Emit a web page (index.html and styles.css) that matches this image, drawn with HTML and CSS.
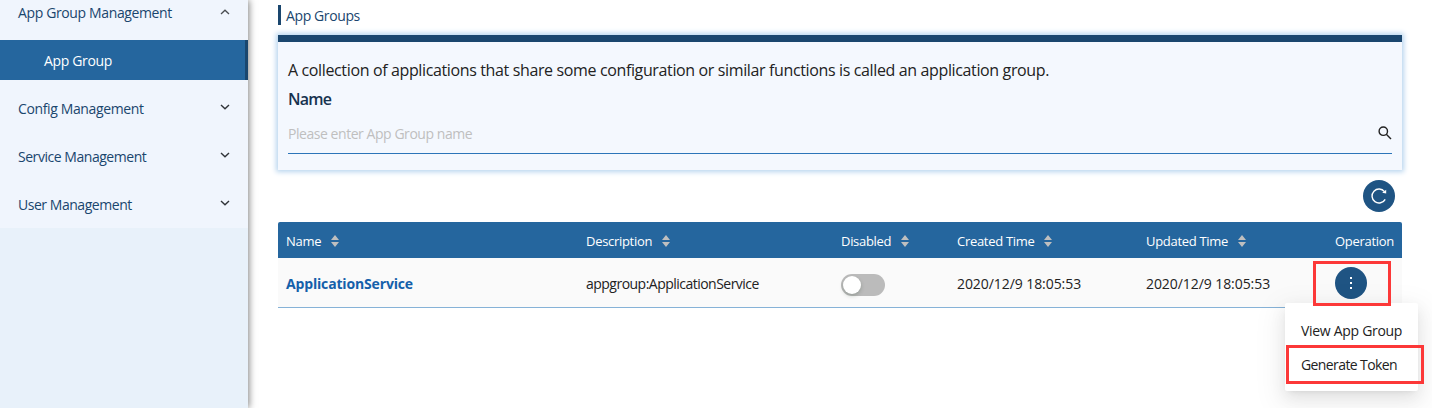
FILE: index.html
```html
<!DOCTYPE html>
<html lang="en">
<head>
<meta charset="utf-8">
<title>App Groups</title>
<link rel="stylesheet" href="styles.css">
</head>
<body>
<svg class="defs" width="0" height="0">
  <symbol id="up" viewBox="0 0 10 6"><path d="M1 5 5 1.2 9 5" fill="none" stroke="#4a4d52" stroke-width="1.3"/></symbol>
  <symbol id="down" viewBox="0 0 10 6"><path d="M1 1 5 4.8 9 1" fill="none" stroke="#303338" stroke-width="1.4"/></symbol>
  <symbol id="sort" viewBox="0 0 8 12"><path d="M0 5 4 0 8 5ZM0 7H8L4 12Z" fill="#bfbfbf"/></symbol>
</svg>
<div class="app">
  <nav class="sidebar">
    <div class="menu">
      <div class="item first"><span class="tight-a">App Group Management</span><svg class="chev"><use href="#up"/></svg></div>
      <div class="sub">App Group</div>
      <div class="item"><span class="config">Config Management</span><svg class="chev"><use href="#down"/></svg></div>
      <div class="item"><span>Service Management</span><svg class="chev"><use href="#down"/></svg></div>
      <div class="item"><span>User Management</span><svg class="chev"><use href="#down"/></svg></div>
    </div>
  </nav>
  <main class="main">
    <h1 class="title">App Groups</h1>
    <section class="panel">
      <p class="desc">A collection of applications that share some configuration or similar functions is called an application group.</p>
      <div class="label">Name</div>
      <div class="field">
        <span class="placeholder">Please enter App Group name</span>
        <svg class="search" width="14" height="14" viewBox="0 0 14 14"><g fill="none" stroke="#222" stroke-width="1.4"><circle cx="5.3" cy="5.2" r="4.2"/><path d="M8.3 8.3 13 13"/></g></svg>
      </div>
    </section>
    <div class="toolbar">
      <button class="round" aria-label="Refresh"><svg width="18" height="18" viewBox="0 0 18 18"><path d="M15.2 12.3A7 7 0 1 1 14.5 4.6" fill="none" stroke="#fff" stroke-width="1.4"/><path d="M16.2 2.7V6.6L12.2 5.7Z" fill="#fff"/></svg></button>
    </div>
    <div class="table">
      <div class="row head">
        <span>Name<svg class="sort"><use href="#sort"/></svg></span>
        <span>Description<svg class="sort"><use href="#sort"/></svg></span>
        <span>Disabled<svg class="sort"><use href="#sort"/></svg></span>
        <span>Created Time<svg class="sort"><use href="#sort"/></svg></span>
        <span>Updated Time<svg class="sort"><use href="#sort"/></svg></span>
        <span>Operation</span>
      </div>
      <div class="row body">
        <a class="link">ApplicationService</a>
        <span class="group">appgroup:ApplicationService</span>
        <span><i class="switch"></i></span>
        <span class="date">2020/12/9 18:05:53</span>
        <span class="date">2020/12/9 18:05:53</span>
        <span class="op"><button class="round" aria-label="More"><i class="dots"></i></button>
          <span class="mark mark-op"></span>
          <div class="dropdown">
            <div class="option">View App Group</div>
            <div class="option generate">Generate Token<span class="mark mark-token"></span></div>
          </div>
        </span>
      </div>
    </div>
  </main>
</div>
</body>
</html>
```
FILE: styles.css
```css
* { box-sizing: border-box; }
body { margin: 0; overflow: hidden; background: #fff; font: 14px/20px "Open Sans", "Noto Sans", sans-serif; color: #222; }
.defs { position: absolute; }
.app { display: flex; height: 408px; }

.sidebar { width: 248px; flex: none; background: #e8f1fa; box-shadow: 1px 0 7px rgba(0, 0, 0, .5); }
.menu { height: 228px; background: #f0f5fd; color: #1a466e; letter-spacing: -.46px; overflow: hidden; }
.item { height: 48px; padding: 2px 18px 0; display: flex; align-items: center; justify-content: space-between; }
.item.first { margin-top: -12px; margin-bottom: 4px; }
.tight-a, .config { letter-spacing: -.37px; }
.chev { width: 10px; height: 6px; margin-top: -5px; }
.first .chev { margin-top: -2px; }
.sub { height: 40px; margin-bottom: 4px; padding: 2px 0 0 44px; display: flex; align-items: center; background: #25669e; border-right: 3px solid #1a466e; color: #fff; letter-spacing: -.35px; }

.main { flex: 1; padding: 5px 30px 0; }
.title { margin: 0 0 10px; height: 20px; padding-left: 5px; border-left: 3px solid #1a466e; color: #1a466e; font-size: 14px; line-height: 22px; font-weight: 500; letter-spacing: -.39px; }
.panel { height: 135px; padding: 16px 10px 0; border-top: 7px solid #1a466e; background: #f4f8fe; box-shadow: 0 0 5px 2px #b9d6ef; }
.desc { margin: 0; font-size: 16px; line-height: 24px; letter-spacing: -.365px; }
.label { margin-top: 5px; font-size: 16px; line-height: 24px; font-weight: 600; letter-spacing: -.8px; color: #17334f; }
.field { height: 43px; padding-top: 4px; display: flex; align-items: center; justify-content: space-between; border-bottom: 1px solid #2c75b9; }
.placeholder { color: #bfbfbf; letter-spacing: -.45px; }
.search { margin-top: -3px; }

.toolbar { display: flex; justify-content: flex-end; padding: 10px 7px; }
.round { width: 32px; height: 32px; padding: 0; border: 0; border-radius: 50%; background: #1f5483; display: flex; align-items: center; justify-content: center; }
.row { display: grid; grid-template-columns: 300px 255px 116px 189px 189px 1fr; padding-left: 8px; align-items: center; }
.head { height: 36px; padding-top: 2px; background: #25669e; border-radius: 2px 2px 0 0; color: #fff; font-size: 13px; letter-spacing: -.3px; }
.sort { width: 8px; height: 12px; margin-left: 10px; vertical-align: -1px; }
.body { height: 50px; background: #fafafa; border-bottom: 1px solid #86b2d7; }
.link { color: #1460aa; font-weight: 700; letter-spacing: -.16px; padding-top: 3px; }
.group { letter-spacing: -.52px; padding-top: 3px; }
.date { letter-spacing: -.07px; padding-top: 3px; }
.switch { display: block; width: 44px; height: 22px; margin-top: 4px; border-radius: 11px; background: #bbb; padding: 2px; }
.switch::before { content: ""; display: block; width: 18px; height: 18px; border-radius: 50%; background: #fff; box-shadow: 0 2px 4px rgba(0, 35, 11, .2); }
.op { position: relative; }
.dots { width: 2px; height: 12px; background: linear-gradient(#fff 2px, transparent 2px 5px, #fff 5px 7px, transparent 7px 10px, #fff 10px); }

.dropdown { position: absolute; z-index: 1; left: -50px; top: 36px; width: 133px; height: 88px; padding: 11px 16px; border-radius: 2px; background: #fff; box-shadow: 0 3px 6px -4px rgba(0, 0, 0, .12), 0 6px 16px rgba(0, 0, 0, .08), 0 9px 28px 8px rgba(0, 0, 0, .05); }
.option { position: relative; height: 34px; line-height: 34px; white-space: nowrap; letter-spacing: -.3px; }
.generate { letter-spacing: -.6px; }
.mark { position: absolute; border: 3px solid #fc3838; }
.mark-op { z-index: 2; left: -22px; top: -6px; width: 78px; height: 45px; }
.mark-token { left: -15px; top: -3px; width: 138px; height: 39px; }
```
